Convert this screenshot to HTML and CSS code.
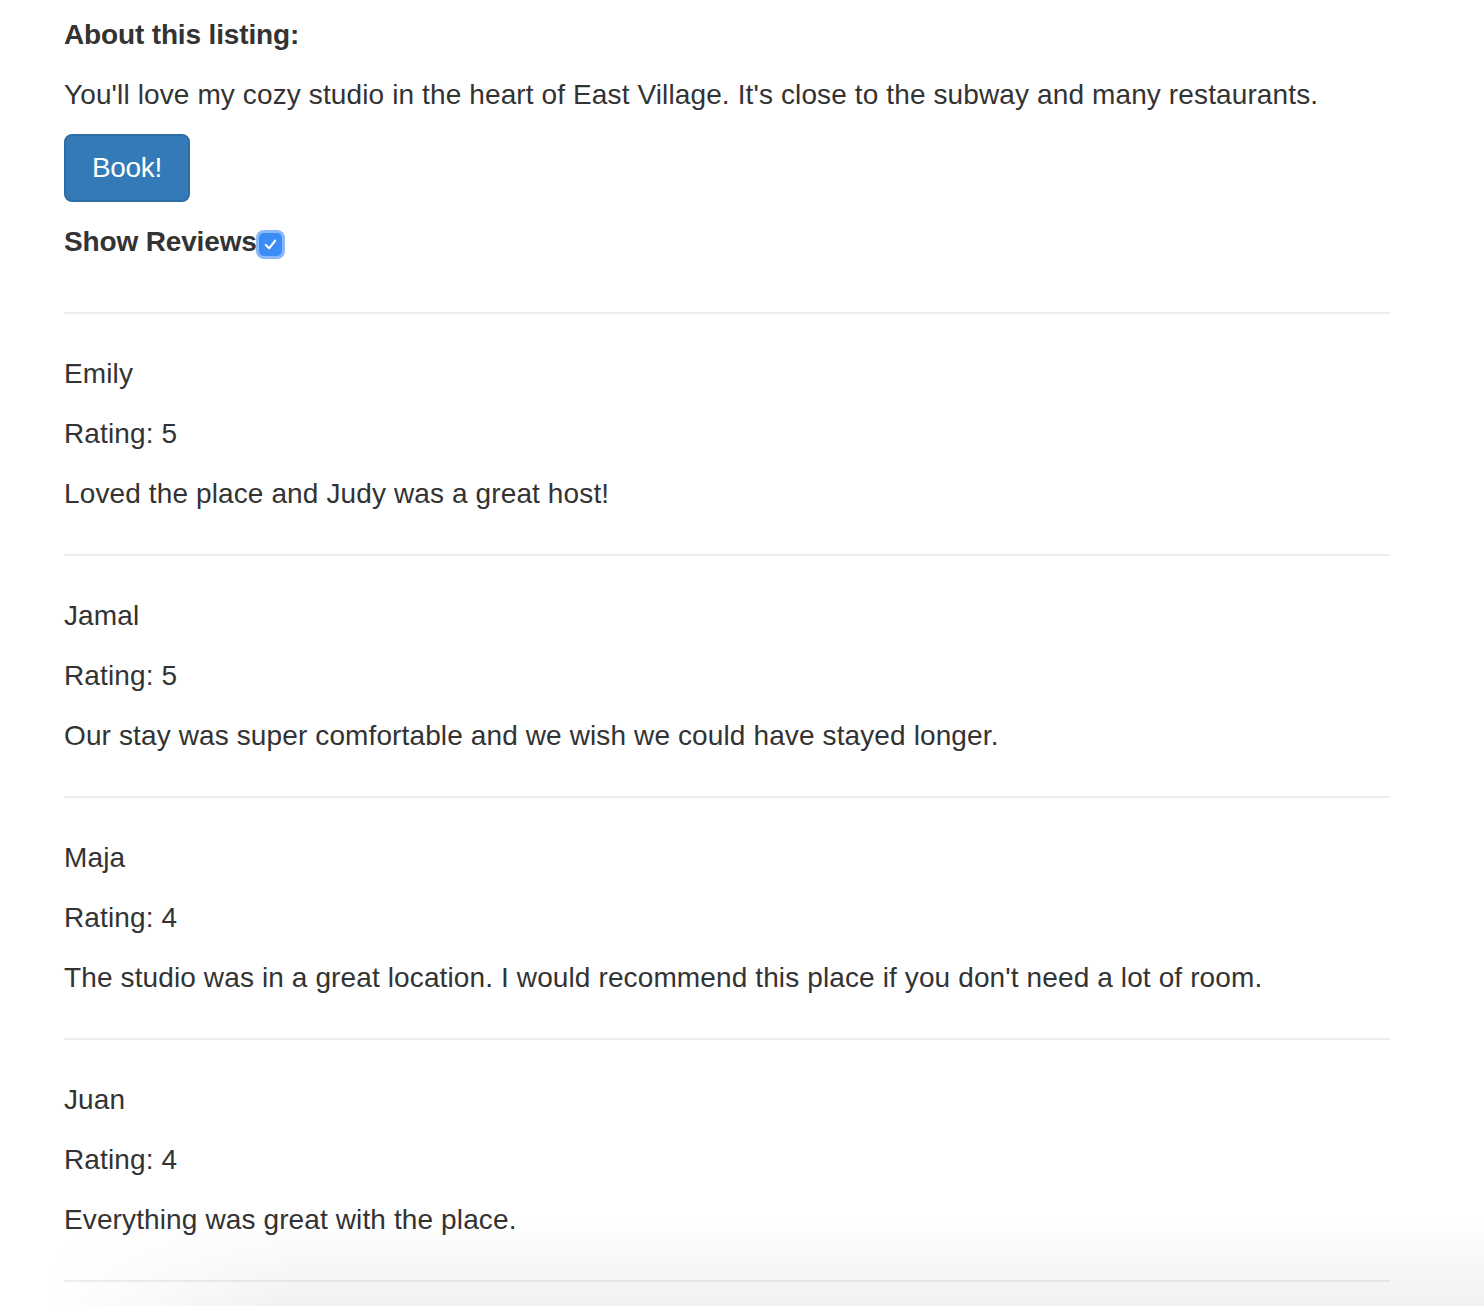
FILE: index.html
```html
<!DOCTYPE html>
<html>
<head>
<meta charset="utf-8">
<link rel="stylesheet" href="styles.css">
</head>
<body>
<div class="container">
  <label class="heading">About this listing:</label>
  <p>You'll love my cozy studio in the heart of East Village. It's close to the subway and many restaurants.</p>
  <button class="btn">Book!</button>
  <div class="toggle">
    <label class="heading">Show Reviews<span class="check"><svg viewBox="0 0 20 20" width="19" height="19"><path d="M5 10.5 L8.6 14 L15 5.8" fill="none" stroke="#fff" stroke-width="2.2" stroke-linecap="round" stroke-linejoin="round"/></svg></span></label>
  </div>
  <div class="review">
    <hr>
    <p>Emily</p>
    <p>Rating: 5</p>
    <p>Loved the place and Judy was a great host!</p>
  </div>
  <div class="review">
    <hr>
    <p>Jamal</p>
    <p>Rating: 5</p>
    <p>Our stay was super comfortable and we wish we could have stayed longer.</p>
  </div>
  <div class="review">
    <hr>
    <p>Maja</p>
    <p>Rating: 4</p>
    <p>The studio was in a great location. I would recommend this place if you don't need a lot of room.</p>
  </div>
  <div class="review">
    <hr>
    <p>Juan</p>
    <p>Rating: 4</p>
    <p>Everything was great with the place.</p>
    <hr>
  </div>
</div>
<div class="shade"></div>
</body>
</html>
```

FILE: styles.css
```css
html, body {
  margin: 0;
  padding: 0;
  background: #fff;
}
body {
  font-family: "Liberation Sans", Arial, sans-serif;
  font-size: 28px;
  line-height: 40px;
  color: #333;
  overflow: hidden;
}
.container {
  width: 1326px;
  padding: 15px 0 0 64px;
  letter-spacing: 0.12px;
}
.heading {
  display: inline-block;
  font-weight: bold;
  margin-bottom: 10px;
  max-width: 100%;
  letter-spacing: -0.15px;
}
p {
  margin: 0 0 20px;
}
.container > .heading + p {
  margin-top: 10px;
}
.btn {
  display: block;
  width: 126px;
  height: 68px;
  padding: 0;
  margin: -1px 0 20px;
  font-family: "Liberation Sans", Arial, sans-serif;
  font-size: 28px;
  line-height: 40px;
  letter-spacing: -0.3px;
  color: #fff;
  background: #337ab7;
  border: 2px solid #2e6da4;
  border-radius: 8px;
}
.toggle {
  margin: 0;
}
.check {
  display: inline-flex;
  align-items: center;
  justify-content: center;
  width: 23px;
  height: 23px;
  margin-left: 2px;
  vertical-align: -3px;
  background: #3b8cf4;
  border-radius: 5px;
  box-shadow: 0 0 0 3px #8ab9f8;
}
hr {
  margin: 40px 0;
  border: 0;
  border-top: 2px solid #eee;
  height: 0;
}
.shade {
  position: fixed;
  left: 0;
  right: 0;
  bottom: 0;
  height: 90px;
  pointer-events: none;
  background: linear-gradient(to bottom, rgba(0,0,0,0), rgba(0,0,0,0.055));
  -webkit-mask-image: linear-gradient(to right, transparent 40px, #000 300px);
  mask-image: linear-gradient(to right, transparent 40px, #000 300px);
}
```
